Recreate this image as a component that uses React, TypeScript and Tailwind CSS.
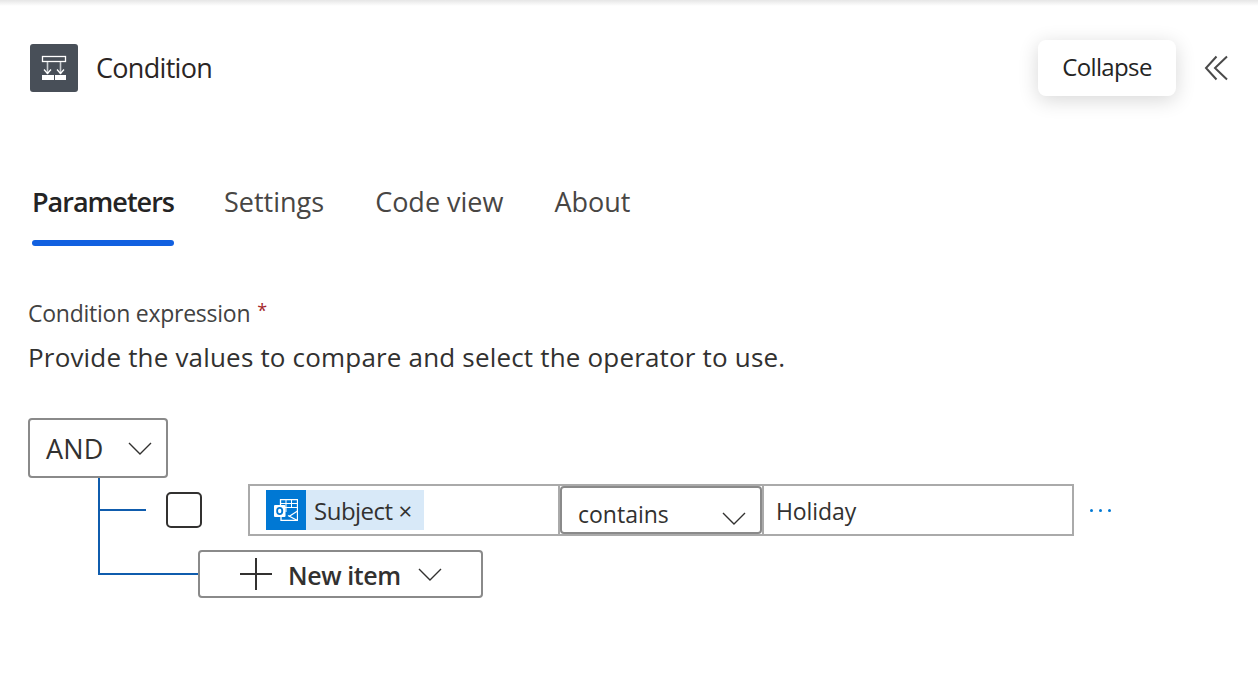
const font = "font-['Open_Sans','Noto_Sans',sans-serif]";

function Chevron({ className = "" }: { className?: string }) {
  return (
    <svg width="24" height="13" viewBox="0 0 24 13" fill="none" stroke="#323130" strokeWidth="1.4" className={className}>
      <path d="M1 1l11 11L23 1" />
    </svg>
  );
}

function ConditionIcon() {
  return (
    <div className="w-[48px] h-[48px] rounded-[3px] bg-[#484f58] flex items-center justify-center">
      <svg width="26" height="26" viewBox="0 0 26 26" fill="none">
        <rect x="1.500" y="1.500" width="23" height="5" stroke="white" strokeWidth="1.300" />
        <path d="M6.500 7v12M19.500 7v12" stroke="#c8ccd0" strokeWidth="1.600" />
        <path d="M3 14.500l3.500 4 3.500-4M16 14.500l3.500 4 3.500-4" stroke="white" strokeWidth="1.300" />
        <rect x="1" y="20" width="12" height="5" fill="white" />
        <rect x="14" y="20" width="11" height="5" fill="white" />
      </svg>
    </div>
  );
}

function OutlookIcon() {
  return (
    <div className="w-[40px] h-[40px] bg-[#0078d4] flex items-center justify-center shrink-0">
      <svg width="24" height="22" viewBox="0 0 24 22" fill="none" stroke="white">
        <path d="M6.500 6V.700h17V12" strokeWidth="1.300" />
        <path d="M12 .700V13M17.500 .700V9M6.500 4.500h17M11 8.500h12.500" strokeWidth="1" />
        <path d="M7 18v3.400h16.500V12L15 17.500" strokeWidth="1.300" />
        <path d="M14 16.500l9.500 5" strokeWidth="1.300" />
        <rect x="0" y="6" width="11.500" height="12" rx="1" fill="white" stroke="none" />
        <ellipse cx="5.700" cy="12" rx="2.600" ry="3.200" stroke="#0078d4" strokeWidth="1.800" />
      </svg>
    </div>
  );
}

export default function App() {
  return (
    <div className={`${font} relative w-[1258px] h-[698px] overflow-hidden bg-white text-[#323130]`}>
      <div className="h-[6px] bg-gradient-to-b from-[#e6e6e6] to-white" />

      <div className="flex items-center justify-between pl-[30px] pr-[28px] pt-[34px]">
        <div className="flex items-center gap-[18px]">
          <ConditionIcon />
          <span className="text-[27px] leading-[48px] tracking-[-0.7px] text-[#2b2524]">Condition</span>
        </div>
        <div className="flex items-center gap-[28px] mb-[-1px]">
          <div className="w-[138px] h-[56px] pb-[2px] rounded-[8px] bg-white shadow-[0_4px_20px_rgba(0,0,0,0.16)] flex items-center justify-center text-[24px] tracking-[-0.65px] text-[#242424]">
            Collapse
          </div>
          <svg width="26" height="26" viewBox="0 0 26 26" fill="none" stroke="#4a4a4a" strokeWidth="2">
            <path d="M12.500 1.500L2 13l10.500 11.500M23 1.500L11 13l12 11.500" />
          </svg>
        </div>
      </div>

      <div className="flex pl-[32px] gap-[51px] mt-[87px] text-[27px] leading-[40px] tracking-[0px] text-[#484644]">
        <div className="w-[142px] mr-[-1px]">
          <div className="font-semibold text-[#242424] tracking-[-1px] whitespace-nowrap">Parameters</div>
          <div className="h-[6px] mt-[18px] rounded-full bg-[#1160e0]" />
        </div>
        <span>Settings</span>
        <span>Code view</span>
        <span>About</span>
      </div>

      <div className="flex items-start pl-[28px] mt-[51px] text-[23px] leading-[32px] tracking-[-0.25px] text-[#424242]">
        Condition expression
        <span className="ml-[7px] text-[18px] leading-[26px] text-[#a4262c]">*</span>
      </div>
      <div className="pl-[28px] mt-[10px] text-[26px] leading-[36px] tracking-[0.18px] text-[#323130]">
        Provide the values to compare and select the operator to use.
      </div>

      <div className="ml-[28px] mt-[43px]">
        <div className="w-[140px] h-[60px] border-[2px] border-[#8a8a8a] rounded-[4px] flex items-center justify-between pl-[16px] pr-[14px] text-[27px] tracking-[0.2px] text-[#323130]">
          <span className="pt-[3px]">AND</span>
          <Chevron />
        </div>

        <div className="ml-[70px]">
          <div className="h-[72px] border-l-[2px] border-[#0f5cad] flex items-start">
            <div className="mt-[31px] w-[46px] h-[2px] bg-[#0f5cad]" />
            <div className="mt-[14px] ml-[20px] w-[36px] h-[36px] border-[2px] border-[#323130] rounded-[5px]" />
            <div className="mt-[6px] ml-[46px] w-[826px] h-[52px] border-[2px] border-[#aaaaaa] flex items-stretch">
              <div className="w-[310px] border-r-[2px] border-[#aaaaaa] pl-[16px] flex items-center">
                <div className="flex items-center h-[40px] bg-[#d8e9f8]">
                  <OutlookIcon />
                  <span className="pl-[8px] pr-[12px] pt-[2px] tracking-[-0.5px] text-[24px]">Subject ×</span>
                </div>
              </div>
              <div className="w-[202px] border-[2px] border-[#8a8a8a] rounded-[4px] flex items-end justify-between pl-[16px] pr-[14px] text-[23px]">
                <span className="leading-[36px]">contains</span>
                <Chevron className="mb-[7px]" />
              </div>
              <div className="flex-1 border-l-[2px] border-[#aaaaaa] pl-[12px] pt-[2px] flex items-center text-[23px] tracking-[-0.1px]">
                Holiday
              </div>
            </div>
            <div className="mt-[31px] ml-[16px] flex gap-[6px]">
              <div className="w-[3px] h-[3px] rounded-full bg-[#0078d4]" />
              <div className="w-[3px] h-[3px] rounded-full bg-[#0078d4]" />
              <div className="w-[3px] h-[3px] rounded-full bg-[#0078d4]" />
            </div>
          </div>
          <div className="flex items-start">
            <div className="w-[100px] h-[25px] border-l-[2px] border-b-[2px] border-[#0f5cad]" />
            <div className="w-[285px] h-[48px] border-[2px] border-[#8a8a8a] rounded-[4px] flex items-center pl-[40px] text-[25px] font-semibold tracking-[-0.4px]">
              <svg width="32" height="32" viewBox="0 0 32 32" stroke="#323130" strokeWidth="2">
                <path d="M16 0v32M0 16h32" />
              </svg>
              <span className="ml-[16px] pt-[4px]">New item</span>
              <Chevron className="ml-[17px]" />
            </div>
          </div>
        </div>
      </div>
    </div>
  );
}
